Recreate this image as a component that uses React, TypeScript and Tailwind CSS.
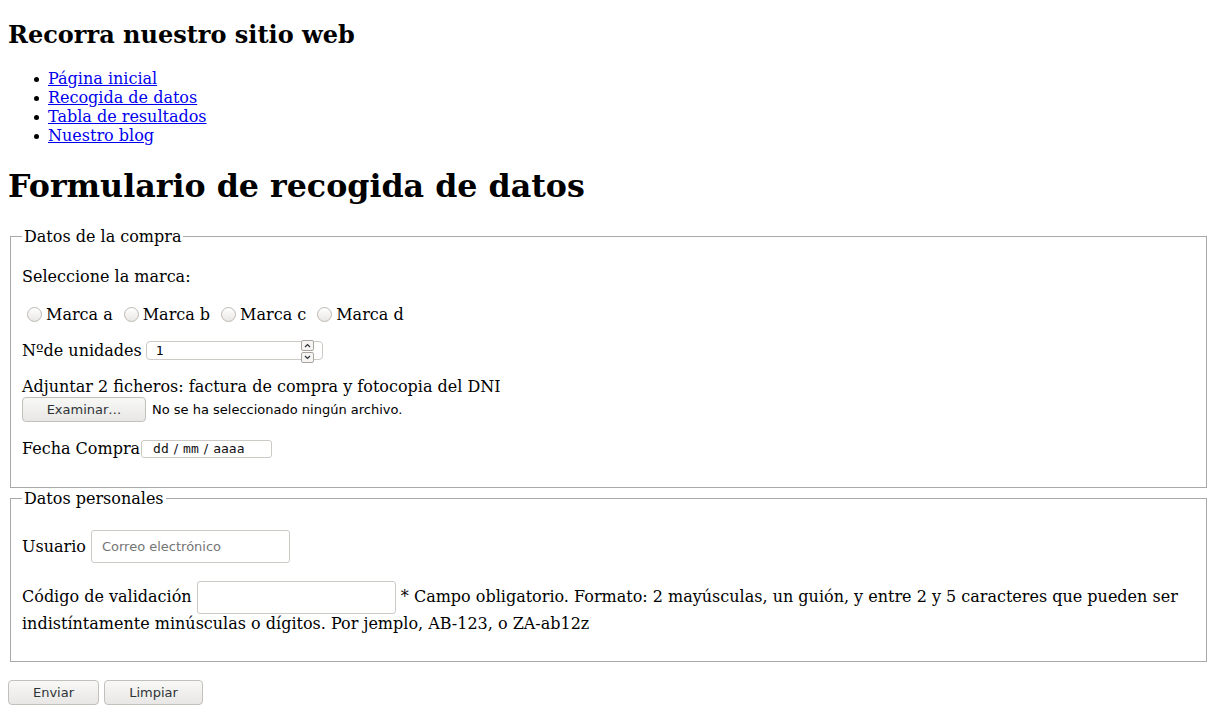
import React from "react";

const links = [
  "Página inicial",
  "Recogida de datos",
  "Tabla de resultados",
  "Nuestro blog",
];

const marcas = ["Marca a", "Marca b", "Marca c", "Marca d"];

const sans = "font-['DejaVu_Sans',sans-serif]";
const mono = "font-['DejaVu_Sans_Mono',monospace]";
const btn = `flex items-center justify-center rounded-[4px] border border-[#c3bfbb] bg-linear-to-b from-[#f8f8f7] to-[#e8e7e5] text-[13px] text-[#2e3436] ${sans}`;
const field = "rounded-[3px] border border-[#cdc9c5] bg-white";

function Radio({ label }: { label: string }) {
  return (
    <label className="flex items-center">
      <span className="ml-[5px] mr-[4px] h-[15px] w-[15px] rounded-full border border-[#bcb8b3] bg-linear-to-b from-[#ffffff] to-[#e9e7e5]" />
      {label}
    </label>
  );
}

function Spin({ up }: { up?: boolean }) {
  return (
    <span className="flex h-[11px] w-[13px] items-center justify-center rounded-[2px] border border-[#a9a6a2] bg-[#f6f5f4]">
      <svg width="7" height="5" viewBox="0 0 7 5">
        <path
          d={up ? "M1 4 L3.5 1.5 L6 4" : "M1 1 L3.5 3.5 L6 1"}
          fill="none"
          stroke="#2e3436"
          strokeWidth="1.2"
        />
      </svg>
    </span>
  );
}

export default function App() {
  return (
    <div className="min-h-screen bg-white px-2 pt-[21px] font-['DejaVu_Serif',serif] text-base leading-[19px] text-black">
      <h2 className="text-2xl leading-[28px] font-bold">
        Recorra nuestro sitio web
      </h2>
      <ul className="mt-5 pl-[26px]">
        {links.map((l) => (
          <li key={l} className="flex items-center">
            <span className="mr-[9px] mt-[1px] h-[5px] w-[5px] rounded-full bg-black" />
            <a href="#" className="text-[#0000ee] underline">
              {l}
            </a>
          </li>
        ))}
      </ul>

      <h1 className="mt-[22px] text-[31.7px] leading-[37px] font-bold">
        Formulario de recogida de datos
      </h1>

      <fieldset className="mx-[2px] mt-[23px] border border-[#a9a9a9] px-[11px] pt-[5px] pb-[12px]">
        <legend className="px-[2px]">Datos de la compra</legend>
        <p className="my-4">Seleccione la marca:</p>
        <div className="flex h-[23px] items-center gap-[6px] pt-[2px]">
          {marcas.map((m) => (
            <Radio key={m} label={m} />
          ))}
        </div>
        <div className="mt-[15px] flex h-[20px] items-center">
          <span>Nºde unidades</span>
          <span
            className={`relative ml-[4px] flex h-[19px] w-[177px] items-center ${field} rounded-[4px]`}
          >
            <span className={`pl-[9px] text-[13px] ${mono}`}>1</span>
            <span className="absolute top-[-2px] left-[154px] flex flex-col gap-[1px]">
              <Spin up />
              <Spin />
            </span>
          </span>
        </div>
        <p className="mt-[17px]">
          Adjuntar 2 ficheros: factura de compra y fotocopia del DNI
        </p>
        <div className="flex h-[26px] items-center pt-[1px]">
          <span className={`${btn} h-[25px] w-[124px]`}>Examinar…</span>
          <span className={`ml-[6px] text-[13px] ${sans}`}>
            No se ha seleccionado ningún archivo.
          </span>
        </div>
        <div className="mt-4 flex h-[21px] items-center">
          <span>Fecha Compra</span>
          <span
            className={`ml-[1px] flex h-[18px] w-[131px] items-center pl-[11px] text-[13px] text-[#111] ${field}`}
          >
            <span className={mono}>dd</span>
            <span className={`${sans} px-[5px]`}>/</span>
            <span className={mono}>mm</span>
            <span className={`${sans} px-[5px]`}>/</span>
            <span className={mono}>aaaa</span>
          </span>
        </div>
        <div className="h-4" />
      </fieldset>

      <fieldset className="mx-[2px] mt-[1px] border border-[#a9a9a9] px-[11px] pt-[5px] pb-[12px]">
        <legend className="px-[2px]">Datos personales</legend>
        <div className="mt-[15px] flex h-[37px] items-center">
          <span>Usuario</span>
          <span
            className={`ml-[5px] flex h-[33px] w-[199px] items-center pl-[10px] text-[13px] text-[#757575] ${field} ${sans}`}
          >
            Correo electrónico
          </span>
        </div>
        <p className="mt-4 mb-4">
          Código de validación{" "}
          <span
            className={`inline-block h-[33px] w-[199px] align-middle ${field}`}
          />{" "}
          * Campo obligatorio. Formato: 2 mayúsculas, un guión, y entre 2 y 5
          caracteres que pueden ser indistíntamente minúsculas o dígitos. Por
          jemplo, AB-123, o ZA-ab12z
        </p>
      </fieldset>

      <div className="mt-[18px] flex gap-[5px] pb-4">
        <button className={`${btn} h-[25px] w-[91px]`}>Enviar</button>
        <button className={`${btn} h-[25px] w-[99px]`}>Limpiar</button>
      </div>
    </div>
  );
}
